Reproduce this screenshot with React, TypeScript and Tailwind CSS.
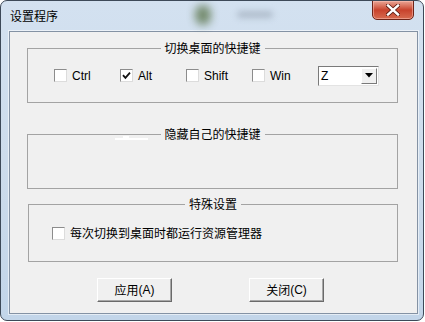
import React, { useState } from 'react';

const cjk = { fontFamily: '"Noto Sans CJK SC", "Liberation Sans", sans-serif' };
const latin = { fontFamily: '"Liberation Sans", "Noto Sans CJK SC", sans-serif' };

const CheckBox: React.FC<{ checked: boolean; onToggle: () => void }> = ({ checked, onToggle }) => (
  <span
    onClick={onToggle}
    className="w-[13px] h-[13px] shrink-0 bg-white border border-t-[#8c8c8c] border-l-[#8c8c8c] border-r-[#dcdcdc] border-b-[#dcdcdc] flex items-center justify-center"
  >
    {checked && (
      <svg width="9" height="9" viewBox="0 0 9 9">
        <path d="M1 4.2 L3.4 6.8 L8 1.6" fill="none" stroke="#111" strokeWidth="1.8" />
      </svg>
    )}
  </span>
);

const GroupBox: React.FC<{ title: string; className: string; children?: React.ReactNode }> = ({ title, className, children }) => (
  <div className={`relative border border-[#a3a3a3] ${className}`}>
    <span
      style={cjk}
      className="absolute left-1/2 -translate-x-1/2 top-[-9px] px-[4px] bg-[#f0f0f0] text-[12px] leading-[16px] text-black whitespace-nowrap"
    >
      {title}
    </span>
    {children}
  </div>
);

const Button: React.FC<{ label: string; hotkey: string }> = ({ label, hotkey }) => (
  <button className="w-[75px] h-[24px] bg-[#f0f0f0] border border-t-white border-l-white border-r-[#6a6a6a] border-b-[#6a6a6a] shadow-[inset_-1px_-1px_0_#a8a8a8] flex items-center justify-center text-[12px] text-black">
    <span style={cjk}>{label}</span>
    <span style={latin}>({hotkey})</span>
  </button>
);

export default function App() {
  const [keys, setKeys] = useState({ Ctrl: false, Alt: true, Shift: false, Win: false });
  const [runExplorer, setRunExplorer] = useState(false);

  return (
    <div className="w-[425px] h-[322px] bg-white">
      <div className="relative w-[424px] h-[321px] rounded-[7px] border border-[#3d4958] bg-gradient-to-b from-[#d3e1f0] via-[#cddcec] to-[#c2d5e9] flex flex-col overflow-hidden">
        {/* blurred desktop showing through the glass */}
        <div className="absolute left-[194px] top-[4px] w-[16px] h-[20px] rounded-full bg-[#4f6a3a] blur-[4px] opacity-70" />
        <div className="absolute left-[236px] top-[10px] w-[36px] h-[7px] rounded-full bg-[#8c99a8] blur-[3px] opacity-50" />

        <div className="h-[30px] flex items-start justify-between shrink-0 relative">
          <span style={cjk} className="pl-[9px] pt-[7px] text-[12px] leading-[16px] text-black">
            设置程序
          </span>
          <div className="mr-[9px] w-[42px] h-[20px] mt-[-1px] rounded-b-[5px] border border-[#6e2418] bg-gradient-to-b from-[#e9a595] via-[#c8422c] to-[#d66a4f] shadow-[inset_0_0_0_1px_rgba(255,200,190,0.5)] flex items-center justify-center">
            <svg width="14" height="12" viewBox="0 0 14 12">
              <path d="M2 1.5 L12 10.5 M12 1.5 L2 10.5" stroke="#5a1a10" strokeWidth="4" strokeLinecap="square" />
              <path d="M2 1.5 L12 10.5 M12 1.5 L2 10.5" stroke="#fff" strokeWidth="2.4" strokeLinecap="square" />
            </svg>
          </div>
        </div>

        <div className="ml-[8px] w-[409px] h-[283px] border border-[#8492a4] shadow-[0_0_0_1px_rgba(255,255,255,0.55)] bg-[#f0f0f0] flex flex-col">
          <div className="pl-[17px] pt-[16px]">
            <GroupBox title="切换桌面的快捷键" className="w-[371px] h-[55px] flex items-center pl-[26px]">
              {(['Ctrl', 'Alt', 'Shift', 'Win'] as const).map((k) => (
                <label key={k} className="w-[66px] flex items-center gap-[5px] last:w-[64px]">
                  <CheckBox checked={keys[k]} onToggle={() => setKeys({ ...keys, [k]: !keys[k] })} />
                  <span style={latin} className="text-[12px] leading-[14px] text-black">
                    {k}
                  </span>
                </label>
              ))}
              <div className="w-[61px] h-[20px] bg-white border border-t-[#7a7a7a] border-l-[#7a7a7a] border-r-[#e3e3e3] border-b-[#e3e3e3] flex items-stretch">
                <span style={latin} className="flex-1 pl-[2px] text-[12px] leading-[18px] text-black">
                  Z
                </span>
                <span className="w-[16px] m-[1px] bg-[#f0f0f0] border border-t-white border-l-white border-r-[#7a7a7a] border-b-[#7a7a7a] flex items-center justify-center">
                  <svg width="8" height="5" viewBox="0 0 8 5">
                    <path d="M0 0 H8 L4 4.5 Z" fill="#000" />
                  </svg>
                </span>
              </div>
            </GroupBox>
          </div>

          <div className="pl-[17px] pt-[31px]">
            <GroupBox title="隐藏自己的快捷键" className="w-[371px] h-[55px]">
              <span className="absolute left-[87px] top-[3px] w-[33px] h-[2px] bg-white" />
              <span className="absolute left-[95px] top-[1px] w-[6px] h-[2px] bg-white" />
            </GroupBox>
          </div>

          <div className="pl-[18px] pt-[15px]">
            <GroupBox title="特殊设置" className="w-[370px] h-[58px] flex items-center pl-[23px]">
              <label className="flex items-center gap-[5px]">
                <CheckBox checked={runExplorer} onToggle={() => setRunExplorer(!runExplorer)} />
                <span style={cjk} className="text-[12px] leading-[16px] text-black">
                  每次切换到桌面时都运行资源管理器
                </span>
              </label>
            </GroupBox>
          </div>

          <div className="flex pl-[87px] pt-[16px] gap-[77px]">
            <Button label="应用" hotkey="A" />
            <Button label="关闭" hotkey="C" />
          </div>
        </div>
      </div>
    </div>
  );
}
